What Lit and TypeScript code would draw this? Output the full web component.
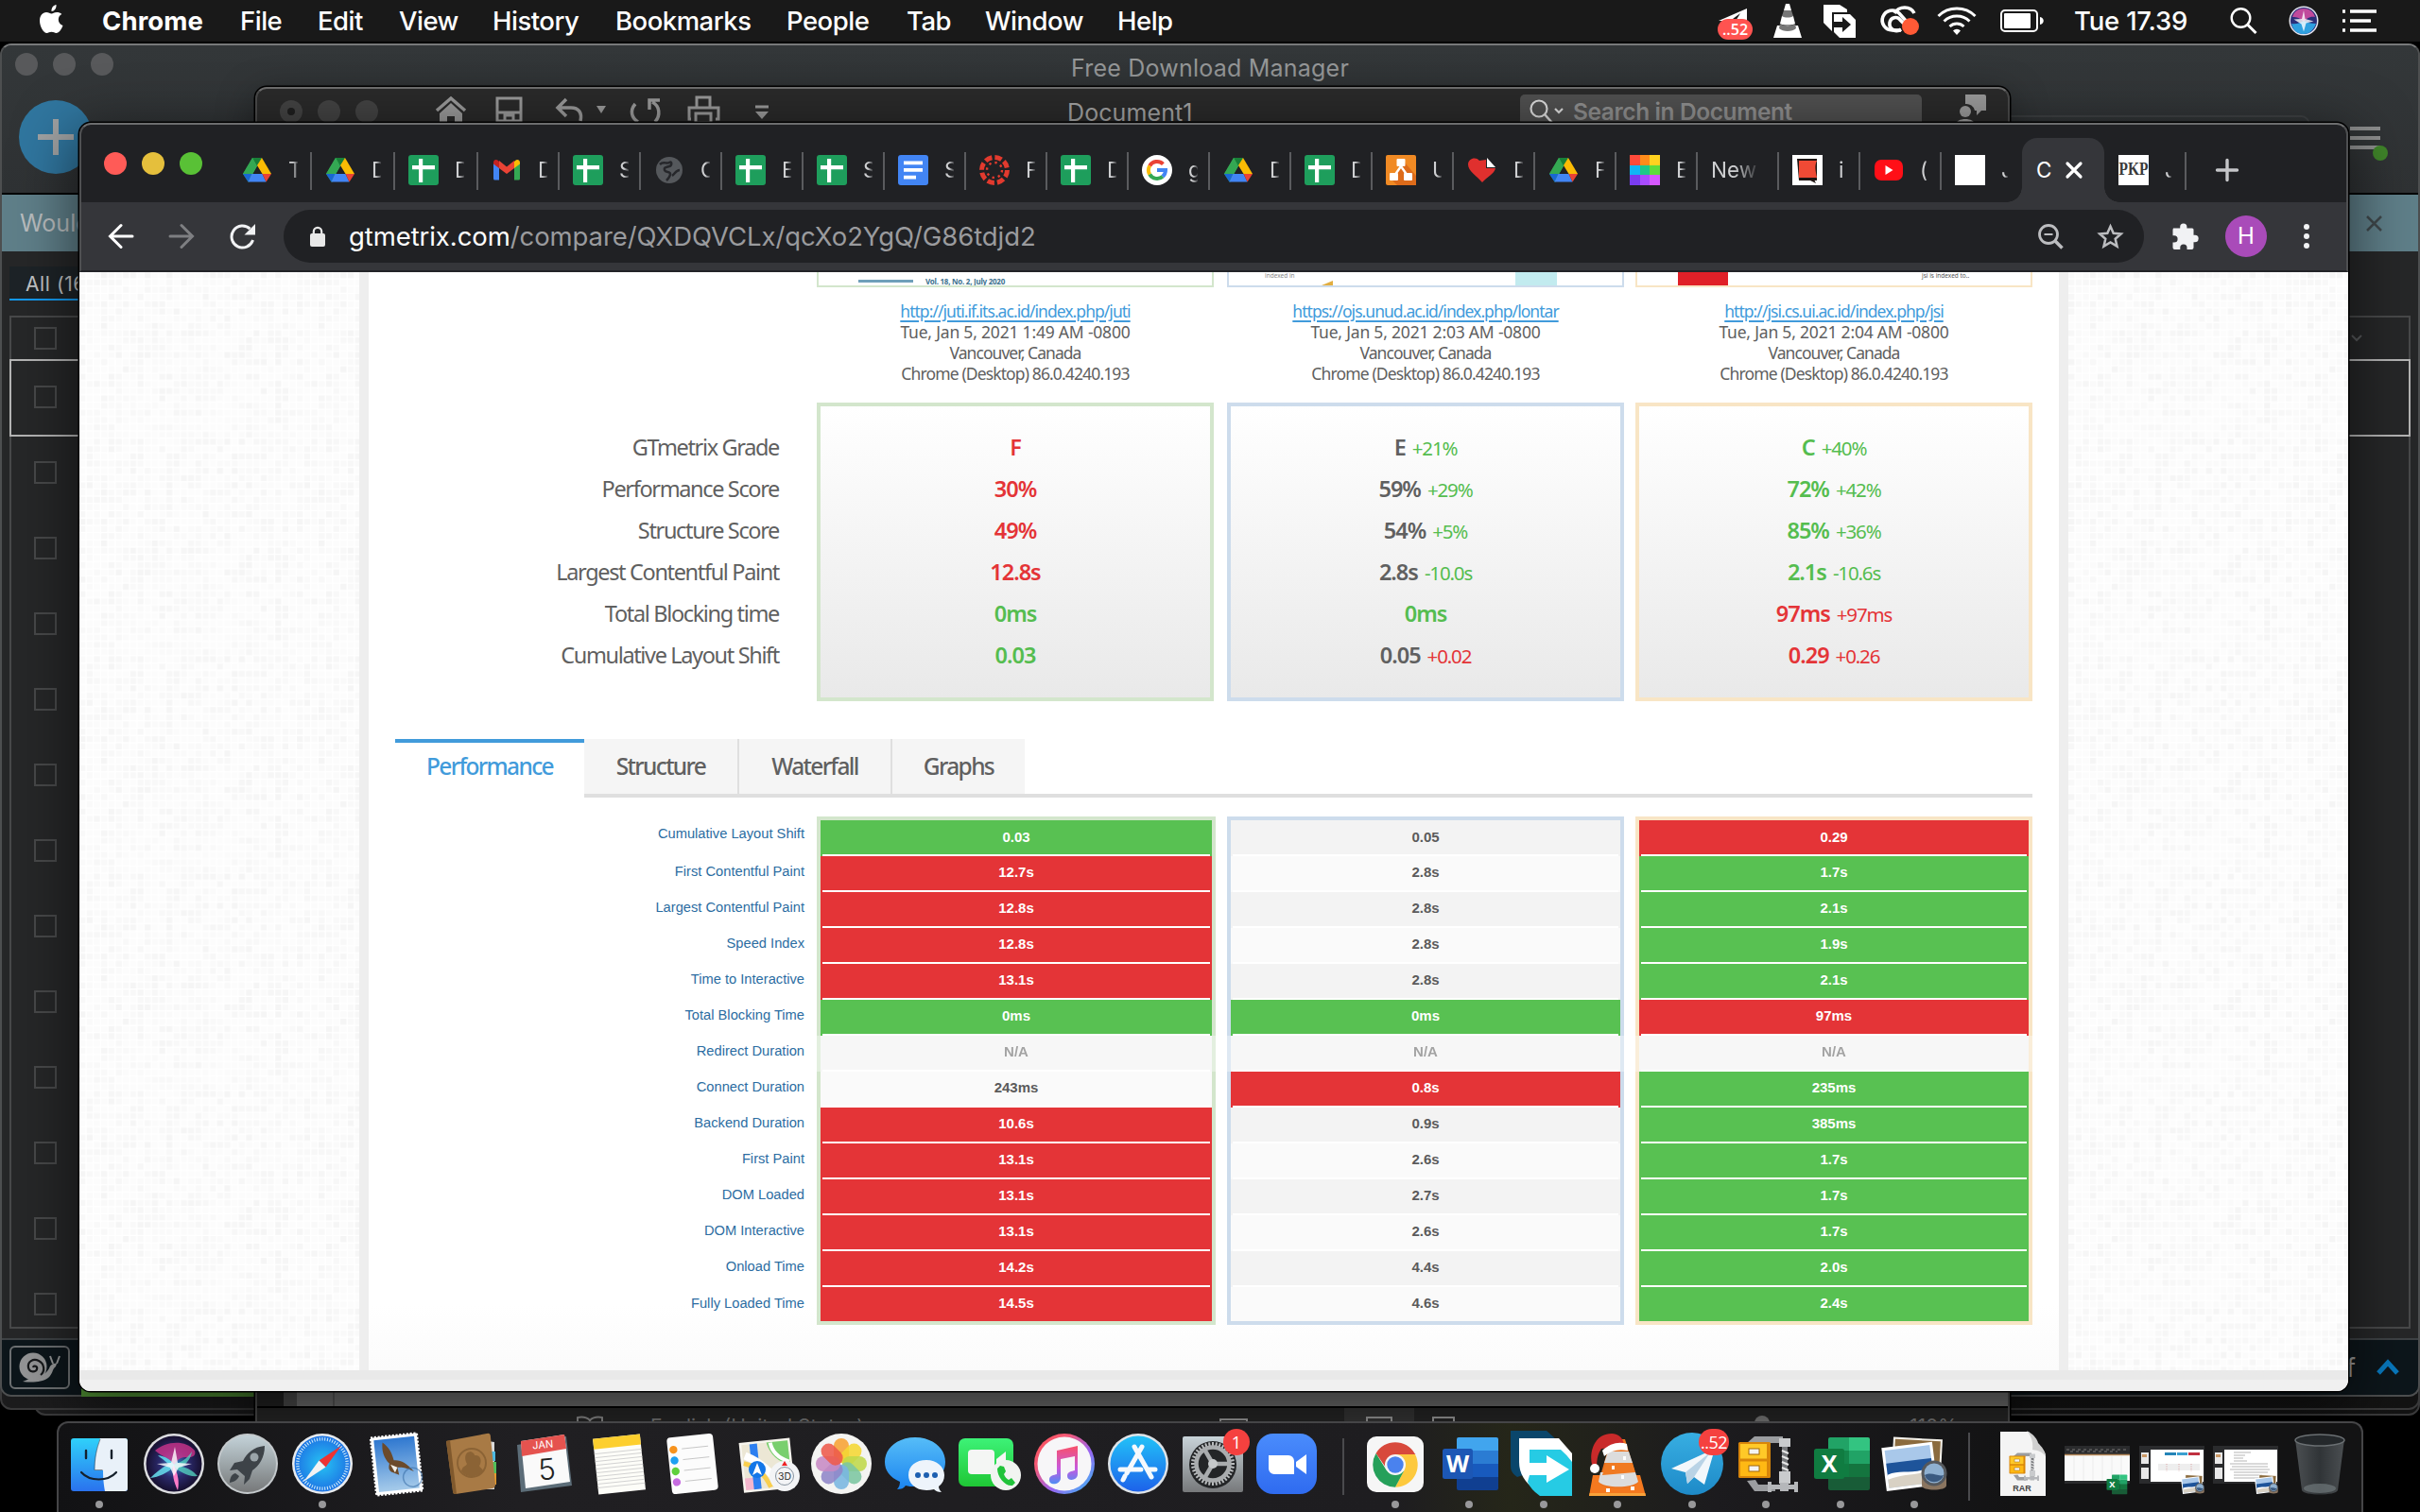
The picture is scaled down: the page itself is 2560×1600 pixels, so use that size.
import { LitElement, html, svg, css, nothing } from "lit";
import { customElement } from "lit/decorators.js";
import { classMap } from "lit/directives/class-map.js";

/* ---------- small favicons (32 x 32) ---------- */
const fav: Record<string, unknown> = {
  drive: html`<svg viewBox="0 0 32 32"><path d="M11 3h10L11 20H1z" fill="#34a853"/><path d="M11 3h10l-5 9z" fill="#188038"/><path d="M11 3l5 9-9 17L1 20z" fill="#34a853"/><path d="M21 3l10 17H21.5L16 11z" fill="#fbbc04"/><path d="M1 20h9.5l-4 8.500z" fill="#1967d2"/><path d="M10.500 20h11l4 8.500h-19z" fill="#4285f4"/><path d="M21.500 20H31l-5.500 8.500z" fill="#ea4335"/><path d="M16 12.500l4.500 7.500h-9z" fill="#202124"/></svg>`,
  sheet: html`<svg viewBox="0 0 32 32"><rect width="32" height="32" rx="3" fill="#1e9e5c"/><path d="M4 11h24v4.200H4zM11 4h4.200v25H11z" fill="#fff"/></svg>`,
  gmail: html`<svg viewBox="0 0 32 32"><path d="M2 8v17a1.500 1.500 0 0 0 1.500 1.500H8V13z" fill="#4285f4"/><path d="M30 8v17a1.500 1.500 0 0 1-1.500 1.500H24V13z" fill="#34a853"/><path d="M24 7v7l6-4.500V8c0-3-3-4-5-2z" fill="#fbbc04"/><path d="M8 6v8l8 6 8-6V6l-8 6.500z" fill="#ea4335"/><path d="M2 9.500 8 14V7L7 6C5 4 2 5 2 8z" fill="#c5221f"/></svg>`,
  globe: html`<svg viewBox="0 0 32 32"><circle cx="16" cy="16" r="14" fill="#55585c"/><path d="M6 10c4-4 7 0 10-2s3 3 0 4-6 1-5 4 6 1 6 4-2 5-4 7M19 22c3-2 4-6 8-6" stroke="#26272b" stroke-width="2.500" fill="none"/></svg>`,
  docs: html`<svg viewBox="0 0 32 32"><rect width="32" height="32" rx="3" fill="#4285f4"/><path d="M6 6.500h20v3.800H6zM6 14h20v3.800H6zM6 21.800h13v3.800H6z" fill="#fff"/></svg>`,
  canvas: html`<svg viewBox="0 0 32 32"><circle cx="16" cy="16" r="13.500" fill="none" stroke="#e23a2e" stroke-width="5" stroke-dasharray="7.500 3.100"/><circle cx="16" cy="16" r="8" fill="none" stroke="#e23a2e" stroke-width="2.400" stroke-dasharray="2.400 3.900"/></svg>`,
  google: html`<svg viewBox="0 0 32 32"><circle cx="16" cy="16" r="16" fill="#fff"/><g fill="none" stroke-width="4"><path d="M22.400 9.600A9 9 0 0 0 8.200 11.500" stroke="#ea4335"/><path d="M8.200 11.500a9 9 0 0 0 0 9" stroke="#fbbc04"/><path d="M8.200 20.500A9 9 0 0 0 22 22.700" stroke="#34a853"/><path d="M22 22.700a9 9 0 0 0 3-6.700h-9" stroke="#4285f4"/></g></svg>`,
  orange: html`<svg viewBox="0 0 32 32"><rect width="32" height="32" rx="2" fill="#f08a24"/><path d="M20 8l12 14v10H12L6 26z" fill="#dd6b1a"/><path d="M16 8v6M16 12l-7 10M16 12l7 10" stroke="#fff" stroke-width="2.400"/><rect x="11.500" y="4" width="9" height="8" rx="1" fill="#fff"/><rect x="4" y="19" width="9" height="8" rx="1" fill="#fff"/><rect x="19" y="19" width="9" height="8" rx="1" fill="#fff"/></svg>`,
  heart: html`<svg viewBox="0 0 32 32"><path d="M16 29C10 22 1 17 1 10c0-6 8-9 12-4l7-1v9h10c-1 6-9 9-14 15z" fill="#e0302e"/><path d="M21 3l9 10h-9z" fill="#fff"/></svg>`,
  grid: html`<svg viewBox="0 0 32 32"><path d="M0 0h11v11H0z" fill="#ff4a3a"/><path d="M11 0h10v11H11z" fill="#ff8c1a"/><path d="M21 0h11v11H21z" fill="#ffd21f"/><path d="M0 11h11v10H0z" fill="#10b5f5"/><path d="M11 11h10v10H11z" fill="#1dc98a"/><path d="M21 11h11v10H21z" fill="#5fdc3c"/><path d="M0 21h11v11H0z" fill="#7a3cf0"/><path d="M11 21h10v11H11z" fill="#a84cff"/><path d="M21 21h11v11H21z" fill="#d557ff"/></svg>`,
  book: html`<svg viewBox="0 0 32 32"><rect width="32" height="32" fill="#fff"/><path d="M5 4h21v23H7z" fill="#1f1412"/><path d="M7 6h19c-3 6-1 12 0 18H7z" fill="#f04a35"/><path d="M17 26h6l2 4z" fill="#1f1412"/></svg>`,
  youtube: html`<svg viewBox="0 0 32 32"><rect x="1" y="5" width="30" height="22" rx="7" fill="#ff0f17"/><path d="M12.500 11v10l8-5z" fill="#fff"/></svg>`,
  blank: html`<svg viewBox="0 0 32 32"><rect width="32" height="32" fill="#fff"/></svg>`,
  pkp: html`<svg viewBox="0 0 32 32"><rect width="32" height="32" fill="#fff"/><text x="16" y="21" text-anchor="middle" textLength="31" lengthAdjust="spacingAndGlyphs" font-family="Liberation Serif, serif" font-weight="700" font-size="19" fill="#3a3a3a">PKP</text></svg>`,
};

const tabs: { icon?: string; text: string; wide?: boolean; active?: boolean }[] = [
  { icon: "drive", text: "T", wide: true }, { icon: "drive", text: "D", wide: true }, { icon: "sheet", text: "D", wide: true },
  { icon: "gmail", text: "D" }, { icon: "sheet", text: "S" }, { icon: "globe", text: "C" }, { icon: "sheet", text: "E" },
  { icon: "sheet", text: "S" }, { icon: "docs", text: "S" }, { icon: "canvas", text: "F" }, { icon: "sheet", text: "D" },
  { icon: "google", text: "g" }, { icon: "drive", text: "D" }, { icon: "sheet", text: "D" }, { icon: "orange", text: "U" },
  { icon: "heart", text: "D" }, { icon: "drive", text: "F" }, { icon: "grid", text: "E" }, { text: "New" },
  { icon: "book", text: "i" }, { icon: "youtube", text: "(" }, { icon: "blank", text: "J" }, { text: "C", active: true },
  { icon: "pkp", text: "J" },
];

/* ---------- compare report data ---------- */
type Tone = "good" | "bad" | "plain" | "na";
type Score = [string, Tone, string?, Tone?];
const scoreLabels = ["GTmetrix Grade", "Performance Score", "Structure Score", "Largest Contentful Paint", "Total Blocking time", "Cumulative Layout Shift"];
const sites: { tint: string; url: string; time: string; scores: Score[] }[] = [
  { tint: "green", url: "http://juti.if.its.ac.id/index.php/juti", time: "Tue, Jan 5, 2021 1:49 AM -0800",
    scores: [["F", "bad"], ["30%", "bad"], ["49%", "bad"], ["12.8s", "bad"], ["0ms", "good"], ["0.03", "good"]] },
  { tint: "blue", url: "https://ojs.unud.ac.id/index.php/lontar", time: "Tue, Jan 5, 2021 2:03 AM -0800",
    scores: [["E", "plain", "+21%", "good"], ["59%", "plain", "+29%", "good"], ["54%", "plain", "+5%", "good"], ["2.8s", "plain", "-10.0s", "good"], ["0ms", "good"], ["0.05", "plain", "+0.02", "bad"]] },
  { tint: "amber", url: "http://jsi.cs.ui.ac.id/index.php/jsi", time: "Tue, Jan 5, 2021 2:04 AM -0800",
    scores: [["C", "good", "+40%", "good"], ["72%", "good", "+42%", "good"], ["85%", "good", "+36%", "good"], ["2.1s", "good", "-10.6s", "good"], ["97ms", "bad", "+97ms", "bad"], ["0.29", "bad", "+0.26", "bad"]] },
];
const metricLabels = ["Cumulative Layout Shift", "First Contentful Paint", "Largest Contentful Paint", "Speed Index", "Time to Interactive", "Total Blocking Time", "Redirect Duration", "Connect Duration", "Backend Duration", "First Paint", "DOM Loaded", "DOM Interactive", "Onload Time", "Fully Loaded Time"];
const g = (...v: string[]) => v.map((x) => [x, "good"] as [string, Tone]);
const b = (...v: string[]) => v.map((x) => [x, "bad"] as [string, Tone]);
const p = (...v: string[]) => v.map((x) => [x, "plain"] as [string, Tone]);
const na: [string, Tone] = ["N/A", "na"];
const metrics: [string, [string, Tone][]][] = [
  ["green", [...g("0.03"), ...b("12.7s", "12.8s", "12.8s", "13.1s"), ...g("0ms"), na, ...p("243ms"), ...b("10.6s", "13.1s", "13.1s", "13.1s", "14.2s", "14.5s")]],
  ["blue", [...p("0.05", "2.8s", "2.8s", "2.8s", "2.8s"), ...g("0ms"), na, ...b("0.8s"), ...p("0.9s", "2.6s", "2.7s", "2.6s", "4.4s", "4.6s")]],
  ["amber", [...b("0.29"), ...g("1.7s", "2.1s", "1.9s", "2.1s"), ...b("97ms"), na, ...g("235ms", "385ms", "1.7s", "1.7s", "1.7s", "2.0s", "2.4s")]],
];

/* paper-like checker texture beside the report */
const texture = (id: string) => {
  const n = 30, step = 7.67;
  let seed = 7;
  const cells = [];
  for (let y = 0; y < n; y++) for (let x = 0; x < n; x++) {
    seed = (seed * 1103515245 + 12345) % 2147483648;
    const r = seed / 2147483648;
    const c = 252 - Math.floor(r * r * 8);
    cells.push(svg`<rect x=${(x * step).toFixed(1)} y=${(y * step).toFixed(1)} width="6.400" height="6.400" fill="rgb(${c},${c},${c})"/>`);
  }
  return html`<svg class="texture"><defs><pattern id=${id} width=${n * step} height=${n * step} patternUnits="userSpaceOnUse">${cells}</pattern></defs><rect width="100%" height="100%" fill="url(#${id})"/></svg>`;
};

/* ---------- dock icons (64 x 64) ---------- */
const petals = ["#f7a233", "#f5d733", "#bfd84a", "#7cc6a0", "#79b6e0", "#8f86c8", "#c78ac4", "#ee5a4a"];
const ticks = (n: number, r1: number, r2: number, w: number, c: string) =>
  Array.from({ length: n }, (_, i) => svg`<line x1="32" y1=${32 - r1} x2="32" y2=${32 - r2} stroke=${c} stroke-width=${w} transform="rotate(${(i * 360) / n} 32 32)"/>`);
const officeTile = (letter: string, c: string[]) => svg`
  <path d="M19 6a2 2 0 0 1 2-2h20v14H19z" fill=${c[0]}/><path d="M41 4h20a2 2 0 0 1 2 2v12H41z" fill=${c[1]}/>
  <path d="M19 18h22v14H19z" fill=${c[2]}/><path d="M41 18h22v14H41z" fill=${c[3]}/>
  <path d="M19 32h22v14H19z" fill=${c[4]}/><path d="M41 32h22v14H41z" fill=${c[5]}/>
  <path d="M19 46h44v12a2 2 0 0 1-2 2H21a2 2 0 0 1-2-2z" fill=${c[6]}/>
  <rect x="4" y="16" width="32" height="32" rx="2.500" fill=${c[7]}/>
  <text x="20" y="41" text-anchor="middle" font-family="Open Sans, Liberation Sans, sans-serif" font-weight="700" font-size="25" fill="#fff">${letter}</text>`;
const excelC = ["#21a366", "#33c481", "#14854a", "#21a366", "#107c41", "#14753f", "#185c37", "#107c41"];
const wordC = ["#41a5ee", "#41a5ee", "#2b7cd3", "#2b7cd3", "#185abd", "#185abd", "#103f91", "#1c57b5"];
const photo = svg`
  <g transform="rotate(3 36 24)"><rect x="9" y="5" width="52" height="40" fill="#f4f1ea"/><rect x="11" y="7" width="48" height="36" fill="#8b6b3e"/></g>
  <g transform="rotate(-7 26 36)"><rect x="0" y="12" width="54" height="46" fill="#fff"/><rect x="3" y="15" width="48" height="40" fill="#a9c8ea"/><path d="M3 29h48v15H3z" fill="#1e549a"/><path d="M3 42c12-5 25 4 48-2v15H3z" fill="#d8d1c4"/><path d="M3 41c15-5 25 4 48-3v3c-20 5-30 0-48 5z" fill="#fff"/></g>
  <path d="M40 42h26v13c0 6-26 6-26 0z" fill="#8a7560"/><circle cx="53" cy="42" r="13.500" fill="#55585c"/><circle cx="53" cy="42" r="10.500" fill="#8fb0d0"/><path d="M43 44a10.500 10.500 0 0 0 20 0c-6 2-12-4-20 0z" fill="#3b5a80"/>`;
const cabinet = svg`
  <path d="M12 10 20 3h30v7H24l-4 6zM12 50l8 11h22v-7H24l-3-5z" fill="#9b9da0"/>
  <path d="M46 5h12v9H46zM46 40h12v13H46z" fill="#c9cbcd"/><path d="M49 14h6v26h-6z" fill="#77797c"/><path d="M49 18l7 3M49 24l7 3M49 30l7 3M49 36l7 3" stroke="#e6e6e6" stroke-width="2.200"/>
  <path d="M34 54h32v5H34zM34 51h4v11h-4zM62 51h4v11h-4zM47 52h9v9h-9z" fill="#b5b7ba"/>
  <rect x="3" y="9" width="34" height="38" rx="1.500" fill="#d8860a"/><rect x="5" y="11" width="28" height="15.500" fill="#ffc928"/><rect x="5" y="29.500" width="28" height="15.500" fill="#ffb914"/>
  <rect x="14" y="16" width="11" height="6" fill="#f4f4f4" stroke="#a0690a"/><rect x="14" y="34" width="11" height="6" fill="#f4f4f4" stroke="#a0690a"/>`;
const miniWindow = (kind: string) => svg`
  <rect x="-2" y="13" width="69" height="40" fill="#2a2b2d"/>
  ${kind === "sheet" ? svg`<rect x="-2" y="23" width="69" height="27" fill="#fafafa"/><path d="M-2 22.500h69" stroke="#b98a5a" stroke-width="1.500"/><path d="M0 17h64M4 19h50" stroke="#777" stroke-width="1" stroke-dasharray="3 3"/><path d="M8 24v26M18 24v26M28 24v26M38 24v26M48 24v26M58 24v26" stroke="#ececec"/>`
    : svg`<rect x="10" y="17" width="56" height="34" fill="#fff"/><rect x="0" y="20" width="8" height="12" fill="#e8e8e8"/><rect x="0" y="36" width="8" height="12" fill="#e8e8e8"/><rect x="1" y="22" width="5" height="3" fill="#c96"/>`}
  ${kind === "compare" ? svg`<path d="M25 20h12v3H25z" fill="#2484b8"/><path d="M38 20h11v3H38z" fill="#3aa0d0"/><path d="M50 20h12v3H50z" fill="#c03040"/><path d="M18 32h44v7H18z" fill="#eee"/><path d="M27 32v8M40 32v8M53 32v8" stroke="#d9a0a0" stroke-dasharray="1 1.500"/>` : nothing}
  ${kind === "text" ? svg`<path d="M20 20h18M20 23h12M20 26h10M20 29h14M16 32h40M18 35h38M16 38h42M20 41h36M20 44h30M20 47h38" stroke="#b5b5b5" stroke-width="1"/>` : nothing}
  ${kind === "sheet" ? svg`<g transform="translate(41 42) scale(.37)">${officeTile("X", excelC)}</g>` : svg`<g transform="translate(43 42) scale(.36)">${photo}</g>`}`;

const apps: Record<string, unknown> = {
  finder: svg`<rect x="2" y="5" width="60" height="56" rx="3" fill="url(#fdL)"/><path d="M33 5h26a3 3 0 0 1 3 3v50a3 3 0 0 1-3 3H38c-1-6-2-12-2-22h-9c0-12 2-24 6-34z" fill="#e9f1f9"/><path d="M18 18v8M45 18v8" stroke="#15202b" stroke-width="2.400" stroke-linecap="round"/><path d="M13 41c9 10 28 10 37 0" stroke="#15202b" stroke-width="2.200" fill="none" stroke-linecap="round"/><path d="M33 6c-4 10-6 21-6 32.500h8.500" stroke="#15202b" stroke-width="1" fill="none" opacity=".5"/>`,
  siri: svg`<circle cx="32" cy="32" r="32" fill="#dcdde0"/><circle cx="32" cy="32" r="29.500" fill="url(#siri)"/><path d="M12 18c10-9 31-13 42 0 2 6-4 8-10 7-6 0-9 4-12 8-5-8-12-8-20-15z" fill="#d8348e" opacity=".75"/><path d="M32 33c-4-6-9-9-17-10 4 4 9 6 11 10-7 3-13 8-19 14 9-1 18-5 25-12z" fill="#67e0f0" opacity=".85"/><path d="M32 33c6-2 14-6 19-14-1 6-4 12-11 16 6 1 12 4 17 10-10 1-18-4-25-10z" fill="#55d9c4" opacity=".75"/><path d="M31 34c-1 9 1 18 5 26 2-9 0-18-4-26z" fill="#ff7cc8"/><path d="M14 32l15-1 4-17 3 17 15 1-14 4-5 9-4-9z" fill="#fff" opacity=".8"/>`,
  launchpad: svg`<circle cx="32" cy="32" r="32" fill="#c4c9cc"/><circle cx="32" cy="32" r="30" fill="url(#lp)"/><path d="M50 13c-12 1-19 8-23 16l-9 2-5 8 8-1 8 7-1 9 6-6 3-9c7-5 13-13 13-26z" fill="#3d4348"/><circle cx="39" cy="25" r="4.500" fill="#9aa4a9"/><path d="M19 42c-4 1-6 5-6 10 5-1 8-3 10-7z" fill="#3d4348"/>`,
  safari: svg`<circle cx="32" cy="32" r="32" fill="#e8ebee"/><circle cx="32" cy="32" r="29.500" fill="url(#saf)"/>${ticks(60, 28, 24.500, 1, "#d9f0fb")}<path d="M52 13 28.500 28.500l7 7z" fill="#ee3333"/><path d="M12 51 28.500 28.500l7 7z" fill="#f3f3f3"/>`,
  mail: svg`<g transform="rotate(-6 32 32)"><rect x="8" y="2" width="49" height="61" fill="#fff" stroke="#fff" stroke-width="2.500" stroke-dasharray="2.200 1.600"/><rect x="11" y="5" width="43" height="55" fill="url(#sky)"/><path d="M20 8c6 5 9 12 10 20 7 0 13 4 20 14-8-5-12-6-17-6l1 8-8-4c-3-3-2-6-1-9-5-6-7-14-5-23z" fill="#6b4a2b"/><path d="M26 32l7 4-3 5z" fill="#f2efe9"/><circle cx="48" cy="48" r="10" fill="none" stroke="#3a6fa8" stroke-width="1.500" opacity=".6"/></g>`,
  contacts: svg`<path d="M50 8l7 1v50H44z" fill="#d9d9d9"/><path d="M52 19h6v10h-6z" fill="#4db8e0"/><path d="M53 30h6v12h-6z" fill="#52c05a"/><path d="M53 42h6v12h-6z" fill="#e59a2d"/><path d="M6 8 49 0q4-1 4 4l5 50q0 3-3 4L16 64q-3 0-3-3z" fill="#a87a45"/><path d="M6 8l4-1 7 57h-2q-2 0-2-3z" fill="#80592d"/><circle cx="33" cy="31" r="15" fill="none" stroke="#8b6335" stroke-width="2"/><path d="M22 40c1-6 5-5 6-8-4-7-1-13 4-13 3 1 4 3 4 4 7-1 8 7 5 11 1 3 4 3 4 6-7 7-17 7-23 0z" fill="#8b6335"/>`,
  calendar: svg`<path d="M3 12l52-9 6 52-54 7z" fill="#5c6d78"/><path d="M7 8l46-7 6 50-47 7z" fill="#fafafa"/><path d="M7 8l46-7 2 15-47 8z" fill="#e5534f"/><g transform="rotate(-5 32 32)" text-anchor="middle"><text x="32" y="15.500" font-family="Inter, sans-serif" font-size="11" fill="#fff">JAN</text><text x="34" y="49" font-family="Inter, sans-serif" font-weight="300" font-size="31" fill="#222">5</text></g>`,
  notes: svg`<g transform="rotate(-6 32 32)"><rect x="7" y="3" width="50" height="59" fill="#fdfdf8"/><rect x="7" y="3" width="50" height="11" fill="#fdcf2e"/>${[19, 23, 27, 31, 35, 39, 43, 47, 51, 55].map((y) => svg`<path d="M7 ${y}h50" stroke="#cfcfcf" stroke-width=".9"/>`)}</g>`,
  reminders: svg`<g transform="rotate(-6 32 32)"><rect x="7" y="2" width="49" height="60" rx="4" fill="#fcfcfc"/>${["#f7931e", "#1ea0f2", "#5fd03c", "#c66be0"].map((c, i) => svg`<circle cx="13" cy=${15 + i * 11.500} r="4.200" fill=${c}/><path d="M22 ${15 + i * 11.500}h28" stroke="#c4c4c4" stroke-width=".9"/>`)}</g>`,
  maps: svg`<g transform="rotate(-6 32 32)"><rect x="4" y="7" width="54" height="53" fill="#f7f5ee"/><rect x="6.500" y="9.500" width="49" height="48" fill="#ece7d5"/><path d="M33 9.500h22.500v26C44 32 35 22 33 9.500z" fill="#79cf6e"/><path d="M6.500 45h14v12.500h-14z" fill="#f4b6cd"/><path d="M15 9.500h8v48h-8z" fill="#2d7ff0"/><path d="M9 21c15 8 26 19 32 34" stroke="#fff" stroke-width="8" fill="none"/><path d="M7 29c14 5 21 14 26 28" stroke="#f9cf4e" stroke-width="5" fill="none"/><path d="M37 10c1 12 9 18 18 22" stroke="#fff" stroke-width="4" fill="none"/></g><circle cx="21" cy="38" r="9" fill="#1477e8"/><path d="M21 31l5 13-5-3-5 3z" fill="#fff"/><circle cx="50" cy="45" r="16" fill="#f3f4f6"/><circle cx="50" cy="45" r="9.500" fill="none" stroke="#8894a0"/><path d="M50 29l3 5h-6z" fill="#e22"/><text x="50" y="49" text-anchor="middle" font-family="Inter, sans-serif" font-size="10.500" fill="#333">3D</text>`,
  photos: svg`<circle cx="32" cy="32" r="32" fill="#f4f4f2"/>${petals.map((c, i) => svg`<rect x="24" y="5" width="16" height="26" rx="8" fill=${c} opacity=".88" transform="rotate(${i * 45} 32 32)"/>`)}`,
  messages: svg`<path d="M31 4c18 0 32 11 32 26S49 56 31 56c-4 0-7 0-10-1-2 3-5 4-9 4 2-2 3-5 3-8C4 46-1 39-1 30 -1 15 13 4 31 4z" fill="url(#msg)"/><path d="M43 28c11 0 19 7 19 16 0 5-2 9-6 12 0 2 1 4 3 6-4 0-6-1-8-3-17 4-27-5-27-15s8-16 19-16z" fill="#eef4fb"/><circle cx="34" cy="44" r="3" fill="#1d5fb0"/><circle cx="43" cy="44" r="3" fill="#1d5fb0"/><circle cx="52" cy="44" r="3" fill="#1d5fb0"/>`,
  facetime: svg`<rect x="-1" y="5" width="58" height="51" rx="7" fill="url(#ft)"/><rect x="9" y="17" width="28" height="26" rx="4" fill="#f4f6f4"/><path d="M39 27l10-8v22l-10-7z" fill="#f4f6f4"/><circle cx="49" cy="44" r="16" fill="#f1f4f1"/><path d="M43 34l4 1 2 5-2 3c1 3 3 5 5 6l3-2 4 5-3 3c-8 1-16-9-16-18z" fill="#20c33a"/>`,
  itunes: svg`<circle cx="32" cy="32" r="32" fill="url(#it)"/><circle cx="32" cy="32" r="28.500" fill="#f7f6f8"/><path d="M24 18l22-5v30c0 7-11 8-11 2 0-5 5-5 8-6V24l-15 3v20c0 7-12 9-12 2 0-5 5-5 8-6z" fill="url(#note)"/>`,
  appstore: svg`<circle cx="32" cy="32" r="32" fill="#dfe4e8"/><circle cx="32" cy="32" r="29.500" fill="url(#as)"/><g stroke="#f5f9fd" stroke-width="5" stroke-linecap="round"><path d="M36 14 20 42M28 14l18 32M13 38h22M42 38h8M18 45l-2 4"/></g>`,
  settings: svg`<rect y="3" width="64" height="59" rx="2" fill="url(#set)"/><circle cx="32" cy="33" r="25" fill="#232527"/>${ticks(36, 23, 19, 2, "#b9bcbe")}<circle cx="32" cy="32" r="17.500" fill="none" stroke="#a9acae" stroke-width="4.500"/><g stroke="#a9acae" stroke-width="4.500"><path d="M32 32H49M32 32 23.500 17.300M32 32 23.500 46.700"/></g><circle cx="32" cy="32" r="5" fill="#c5c8ca"/>`,
  zoom: svg`<rect width="64" height="64" rx="18" fill="url(#zm)"/><path d="M13 23h21a6 6 0 0 1 6 6v14H19a6 6 0 0 1-6-6zM42 30l11-8v21l-11-8z" fill="#fff"/>`,
  chrome: svg`<rect x="2" y="3" width="60" height="59" rx="10" fill="#f6f6f6"/><path d="M32 22h21.500l-1-1A23.700 23.700 0 0 0 11.500 21l12 17z" fill="#d8493c"/><path d="M41.500 38.500 32 56.700A23.700 23.700 0 0 0 53 22H32z" fill="#fdc93e"/><path d="M22.500 38.500 11.500 21A23.700 23.700 0 0 0 32 56.700l9-17z" fill="#25a05a"/><circle cx="32" cy="33" r="11" fill="#f6f6f6"/><circle cx="32" cy="33" r="8.700" fill="#4a82ee"/>`,
  word: officeTile("W", wordC),
  share: svg`<path d="M-3-3h38l10 9L22 40 4 46C-2 42-3 38-3 34z" fill="#0a466b"/><path d="M6 5h42l14 16v30L24 60C12 52 6 42 6 30z" fill="#fff"/><path d="M17 17h33q7 6 12 13v36H28q-10-7-13-15l2-7h18V31H17z" fill="#26cbe4"/><path d="M17 31h18v-8l24 15-24 14v-9H17z" fill="#fff"/>`,
  vlc: svg`<path d="M6 44h50l6 22H2z" fill="#f5791f"/><path d="M2 66h60l-.6-3H2.600z" fill="#f9a23a"/><path d="M25 6h15l14 46c-6 8-36 8-42 0z" fill="#ec7420"/><path d="M22 19h22l4 12H18zM14 41h37l3 10c-6 7-36 7-42 0z" fill="#dcdcdc"/><path d="M16 44l4-13h28l3 10z" fill="#f07a22"/><path d="M15 16C8 26 12 34 8 40 0 28 4 0 26 0c8 0 13 6 13 14z" fill="#c92a2a"/><path d="M16 18c8-8 18-10 26-7l1 7c-10-2-18 0-25 6z" fill="#fff"/><circle cx="8" cy="37" r="5" fill="#fff"/><path d="M26 36h3M38 26h3M46 58h4M20 60h4M36 46h3" stroke="#fff" stroke-width="4"/>`,
  telegram: svg`<circle cx="32" cy="32" r="33" fill="url(#tg)"/><path d="M10 37 56 16 45 54 34 46l-7 7-2-12z" fill="#f2f7fb"/><path d="M25 41l26-21-17 26-7 7z" fill="#b9d3e6"/>`,
  zip: cabinet,
  excel: officeTile("X", excelC),
  preview: photo,
  rar: svg`<path d="M8-2h30c4 4 8 8 9 12 3 5 9 8 9 14v42H8z" fill="#f4f4f4"/><path d="M36-3c6 3 11 8 12 13 4 4 8 9 8 14-4-5-8-6-14-7 1-8-1-14-6-20z" fill="#cfcfcf"/><g transform="translate(16 19) scale(.5)">${cabinet}</g><text x="31" y="61" text-anchor="middle" font-family="Liberation Sans, sans-serif" font-weight="700" font-size="9" fill="#444">RAR</text>`,
  winsheet: miniWindow("sheet"),
  wincompare: miniWindow("compare"),
  wintext: miniWindow("text"),
  trash: svg`<path d="M6 6l7 54c2 6 36 6 38 0l7-54z" fill="url(#tr)"/><ellipse cx="32" cy="7" rx="26" ry="6" fill="#24282b" stroke="#6a6f72" stroke-width="1.500"/><ellipse cx="32" cy="58" rx="17" ry="5" fill="#6f777b" opacity=".7"/>`,
};
const defs = html`<svg class="defs"><defs>
  <linearGradient id="fdL" x2="0" y2="1"><stop stop-color="#2fd1fa"/><stop offset="1" stop-color="#2a72ee"/></linearGradient>
  <linearGradient id="lp" x2="0" y2="1"><stop stop-color="#c3d2d8"/><stop offset="1" stop-color="#77797a"/></linearGradient>
  <radialGradient id="siri"><stop stop-color="#3a8fd0"/><stop offset=".5" stop-color="#2b2a6e"/><stop offset="1" stop-color="#17102f"/></radialGradient>
  <radialGradient id="saf"><stop stop-color="#27c3f3"/><stop offset="1" stop-color="#1d74e4"/></radialGradient>
  <linearGradient id="sky" x2="0" y2="1"><stop stop-color="#2f78d0"/><stop offset="1" stop-color="#a6cbea"/></linearGradient>
  <linearGradient id="msg" x2="0" y2="1"><stop stop-color="#56bdf8"/><stop offset="1" stop-color="#1b84f0"/></linearGradient>
  <linearGradient id="ft" x2="0" y2="1"><stop stop-color="#3df277"/><stop offset="1" stop-color="#1fc735"/></linearGradient>
  <linearGradient id="it" x2="1" y2="1"><stop stop-color="#fb4f52"/><stop offset=".3" stop-color="#f45a78"/><stop offset=".6" stop-color="#9a63f0"/><stop offset="1" stop-color="#2fc4f6"/></linearGradient>
  <linearGradient id="note" x2="0" y2="1"><stop stop-color="#f95068"/><stop offset=".6" stop-color="#c65ae0"/><stop offset="1" stop-color="#4d8df5"/></linearGradient>
  <linearGradient id="as" x2="0" y2="1"><stop stop-color="#22c2f8"/><stop offset="1" stop-color="#1d62ea"/></linearGradient>
  <linearGradient id="set" x2="0" y2="1"><stop stop-color="#c8d3d9"/><stop offset="1" stop-color="#77797b"/></linearGradient>
  <linearGradient id="zm" x2="0" y2="1"><stop stop-color="#4a8cfc"/><stop offset="1" stop-color="#2f6bf0"/></linearGradient>
  <linearGradient id="tg" x2="0" y2="1"><stop stop-color="#37aee2"/><stop offset="1" stop-color="#1e8ac8"/></linearGradient>
  <linearGradient id="tr" x2="1"><stop stop-color="#4b4f52"/><stop offset=".5" stop-color="#303437"/><stop offset="1" stop-color="#4b4f52"/></linearGradient>
</defs></svg>`;

const dockGroups: { name: string; dot?: boolean; badge?: string }[][] = [
  [{ name: "finder", dot: true }, { name: "siri" }, { name: "launchpad" }, { name: "safari", dot: true }, { name: "mail" }, { name: "contacts" }, { name: "calendar" }, { name: "notes" }, { name: "reminders" }, { name: "maps" }, { name: "photos" }, { name: "messages" }, { name: "facetime" }, { name: "itunes" }, { name: "appstore" }, { name: "settings", badge: "1" }, { name: "zoom" }],
  [{ name: "chrome", dot: true }, { name: "word", dot: true }, { name: "share", dot: true }, { name: "vlc", dot: true }, { name: "telegram", dot: true, badge: "..52" }, { name: "zip", dot: true }, { name: "excel", dot: true }, { name: "preview", dot: true }],
  [{ name: "rar" }, { name: "winsheet" }, { name: "wincompare" }, { name: "wintext" }, { name: "trash" }],
];

/* ---------- menu bar ---------- */
@customElement("mac-menubar")
export class MacMenubar extends LitElement {
  static styles = css`
    :host { display: flex; justify-content: space-between; height: 44px; background: #191919; color: #fff; font: 500 27.500px/44px Inter, "Liberation Sans", sans-serif; }
    svg { display: block; overflow: visible; }
    .left { display: grid; grid-template-columns: 108px 146px 82px 86px 99px 130px 181px 127px 83px 140px 90px; white-space: nowrap; letter-spacing: -0.500px; }
    .apple { padding: 5px 0 0 41px; }
    .app { font-weight: 700; letter-spacing: 0.100px; }
    .right { display: flex; align-items: center; padding-right: 46px; }
    .tg { width: 58px; } .vlc { width: 54px; } .sh { width: 60px; } .cc { width: 60px; } .wf { width: 67px; } .bt { width: 78px; }
    .clock { width: 165px; white-space: nowrap; letter-spacing: -0.200px; } .find { width: 62px; } .sr { width: 57px; }
  `;
  render() {
    return html`
      <div class="left">
        <span class="apple"><svg width="27" height="32" viewBox="0 0 27 32"><path d="M19 8c-3 0-4 1.500-5.500 1.500S10.500 8 8 8C4 8 1 11.500 1 17c0 6 4 13 7.500 13 2 0 2.500-1.200 5-1.200s3 1.200 5 1.200c3 0 5.500-4 7-8-3-1.200-4.700-3.500-4.700-6.300 0-2.500 1.300-4.500 3.500-5.700C23 8.600 21 8 19 8zM18.500 0C16 .3 13.200 3 13.500 7c2.800 0 5.400-3 5-7z" fill="#fff"/></svg></span>
        <span class="app">Chrome</span><span>File</span><span>Edit</span><span>View</span><span>History</span><span>Bookmarks</span><span>People</span><span>Tab</span><span>Window</span><span>Help</span>
      </div>
      <div class="right">
        <div class="tg"><svg width="38" height="38" viewBox="0 0 38 38"><path d="M1 19 31 6v14z" fill="#fff"/><path d="M12 20l12-9-6 10z" fill="#191919"/><rect y="17" width="37" height="22" rx="11" fill="#ff5350"/><text x="18.500" y="34" text-anchor="middle" font-size="16" font-family="Open Sans, sans-serif" font-weight="600" fill="#fff">..52</text></svg></div>
        <div class="vlc"><svg width="32" height="40" viewBox="0 0 32 40"><path d="M14 2h4l2 7h-8zM10 15h12l2 8c-3 2-13 2-16 0zM5 25h22l4 13H1z" fill="#fff"/><path d="M12 9h8l2 6c-3 2-9 2-12 0zM8 23c4 3 12 3 16 0l1 5c-4 4-14 4-18 0z" fill="#777"/></svg></div>
        <div class="sh"><svg width="34" height="36" viewBox="0 0 34 36"><path d="M0 1h17l8 5v3H9v20L0 20z" fill="#fff"/><path d="M11 11h17l6 6v19H17l-6-6z" fill="#fff"/><path d="M11 19h9v-5l9 8-9 8v-5h-9z" fill="#191919"/></svg></div>
        <div class="cc"><svg width="41" height="32" viewBox="0 0 41 32"><g fill="none" stroke="#fff" stroke-width="3.600"><path d="M22 26h-9a10.500 10.500 0 1 1 7-18l8 9"/><path d="M15 8C20 0 32 0 36 8M22 25c-5 4-13 0-12-7 1-6 8-7 11-3l6 6"/></g><circle cx="32" cy="22" r="9" fill="#ff5a36"/></svg></div>
        <div class="wf"><svg width="42" height="30" viewBox="0 0 42 30"><g fill="none" stroke="#fff" stroke-width="3"><path d="M1.500 10a28 28 0 0 1 39 0M7.500 15.500a19.500 19.500 0 0 1 27 0M13.500 21a11 11 0 0 1 15 0"/></g><path d="M17 25.500a5.500 5.500 0 0 1 8 0l-4 4.500z" fill="#fff"/></svg></div>
        <div class="bt"><svg width="46" height="24" viewBox="0 0 46 24"><rect x="1" y="1" width="38" height="22" rx="4" fill="none" stroke="#fff" stroke-width="2"/><rect x="4" y="4" width="28" height="16" rx="1" fill="#fff"/><path d="M42 8c5 1 5 7 0 8z" fill="#fff"/></svg></div>
        <div class="clock">Tue 17.39</div>
        <div class="find"><svg width="30" height="30" viewBox="0 0 30 30"><circle cx="11.500" cy="12" r="9.800" fill="none" stroke="#fff" stroke-width="2.400"/><path d="M18.500 19l9 9" stroke="#fff" stroke-width="3"/></svg></div>
        <div class="sr"><svg width="32" height="32" viewBox="0 0 32 32"><circle cx="16" cy="16" r="15.500" fill="#e4e4ee"/><circle cx="16" cy="16" r="14" fill="#2a2f7a"/><path d="M4 12C7 0 25 0 28 12c-6-1-9 2-12 5-4-4-7-5-12-5z" fill="#c04a9c"/><path d="M3 19c2 9 8 11 13 11s10-3 13-11c-5 0-9-1-13-3-3 2-8 4-13 3z" fill="#2fa0e0"/><path d="M16 5l1.500 9 9 2.500-8 2-2.500 9-2.500-8-8-5 8.500-.5z" fill="#fff" opacity=".8"/></svg></div>
        <svg width="36" height="24" viewBox="0 0 36 24"><path d="M0 2h3M0 12h3M0 22h3" stroke="#fff" stroke-width="3.500"/><path d="M8 2h28M8 12h22M8 22h28" stroke="#fff" stroke-width="3.500"/></svg>
      </div>`;
  }
}

/* ---------- Free Download Manager window ---------- */
@customElement("fdm-window")
export class FdmWindow extends LitElement {
  static styles = css`
    :host { display: flex; flex-direction: column; box-sizing: border-box; width: 2560px; height: 1432px; border-radius: 12px; overflow: hidden; background: #262728; border: 2px solid #4d4f50; border-top-color: #77797a; font-family: Inter, "Liberation Sans", sans-serif; }
    svg { display: block; overflow: visible; }
    .head { flex: none; height: 156px; background: linear-gradient(#333739, #2f3234); border-bottom: 2px solid #000; display: flex; flex-direction: column; }
    .title { display: grid; grid-template-columns: 1fr auto 1fr; align-items: center; height: 44px; color: #97999a; font-size: 25px; letter-spacing: 0.220px; padding-top: 2px; }
    .lights { display: flex; gap: 16px; padding-left: 14px; margin-top: -8px; }
    .lights i { width: 24px; height: 24px; border-radius: 50%; background: #58595b; }
    .tools { display: flex; justify-content: space-between; padding: 12px 32px 0 18px; }
    .plus { width: 78px; height: 78px; }
    .menu { margin-top: 28px; }
    .band { flex: none; height: 60px; background: #5f7f89; display: flex; align-items: center; justify-content: space-between; padding: 0 38px 0 19px; color: #b9bdbf; font-size: 25px; }
    .filter { flex: none; margin: 16px 0 0 8px; width: 150px; height: 34px; line-height: 37px; padding-left: 17px; background: #1d2327; border-bottom: 2px solid #149af0; color: #c3c5c6; font-size: 21px; letter-spacing: .6px; }
    .list { flex: none; margin: 16px 8px 0; height: 1072px; border: 2px solid #48494a; box-sizing: border-box; display: flex; flex-direction: column; }
    .row { flex: none; height: 80px; display: flex; align-items: center; justify-content: space-between; padding-left: 24px; }
    .row i { width: 20px; height: 20px; border: 2px solid #48494a; }
    .row.header { height: 44px; padding-right: 49px; }
    .row.on { margin: 0 -2px -2px; padding: 0 0 2px 24px; border: 2px solid #b4b4b4; height: 76px; }
    .foot { margin-top: 10px; flex: 1; border-top: 2px solid #3e4245; background: #0d161b; display: flex; justify-content: space-between; align-items: center; padding: 0 20px 0 8px; }
    .snail { width: 60px; height: 42px; border: 2px solid #6d7072; border-radius: 6px; display: grid; place-items: center; }
    .tail { display: flex; align-items: center; gap: 22px; color: #999; font-size: 27px; }
  `;
  render() {
    return html`
      <div class="head">
        <div class="title"><div class="lights"><i></i><i></i><i></i></div><span>Free Download Manager</span><span></span></div>
        <div class="tools">
          <svg class="plus" viewBox="0 0 78 78"><circle cx="39" cy="39" r="39" fill="#30769f"/><path d="M20 39h38M39 20v38" stroke="#a0a2a3" stroke-width="6"/></svg>
          <svg class="menu" width="40" height="40" viewBox="0 0 40 40"><path d="M0 2h32M0 12h32M0 22h32" stroke="#8e8f8f" stroke-width="4"/><circle cx="32" cy="28" r="8" fill="#40862a"/></svg>
        </div>
      </div>
      <div class="band"><span>Would</span><svg width="17" height="17" viewBox="0 0 17 17"><path d="M1 1l15 15M16 1 1 16" stroke="#3f484b" stroke-width="2.500"/></svg></div>
      <div class="filter">All (16)</div>
      <div class="list">
        <div class="row header"><i></i><svg width="12" height="8" viewBox="0 0 12 8"><path d="M1 1l5 5 5-5" stroke="#56585a" stroke-width="2" fill="none"/></svg></div>
        <div class="row on"><i></i></div>
        ${Array.from({ length: 12 }, () => html`<div class="row"><i></i></div>`)}
      </div>
      <div class="foot">
        <div class="snail"><svg width="44" height="34" viewBox="0 0 44 34"><path d="M4 32c10 1 20 1 27-4 5-4 4-9 8-12l1-3c-3-1-7 1-8 5-3 6-10 9-18 10z" fill="#949596"/><path d="M36 13l-3-8M40 13l3-8" stroke="#949596" stroke-width="2"/><circle cx="15" cy="16" r="14.500" fill="#949596"/><path d="M15 17c1-3 5-1 4 2s-8 4-9-2 5-10 11-7 7 11 2 15" stroke="#17191b" stroke-width="2.200" fill="none"/></svg></div>
        <div class="tail"><span>f</span><svg width="24" height="16" viewBox="0 0 24 16"><path d="M2 14 12 3l10 11" fill="none" stroke="#0878bd" stroke-width="5"/></svg></div>
      </div>`;
  }
}

/* ---------- Word window ---------- */
@customElement("word-window")
export class WordWindow extends LitElement {
  static styles = css`
    :host { display: flex; flex-direction: column; box-sizing: border-box; width: 1856px; height: 1440px; border: 2px solid #4a4a4a; border-top-color: #6e6e6e; border-radius: 12px 12px 0 0; background: #2a2a2a; overflow: hidden; font-family: Inter, "Liberation Sans", sans-serif; }
    svg { display: block; overflow: visible; }
    .bar { height: 44px; flex: none; display: grid; grid-template-columns: 835px 501px 425px 1fr; align-items: start; }
    .left { display: flex; align-items: flex-start; padding: 8px 0 0 24px; }
    .lights { display: flex; gap: 16px; margin: 4px 61px 0 0; }
    .lights i { width: 24px; height: 24px; border-radius: 50%; background: #434343; display: grid; place-items: center; }
    .lights i:first-child::after { content: ""; width: 8px; height: 8px; border-radius: 50%; background: #1f1f1f; }
    .name { color: #a3a3a3; font-size: 25px; line-height: 30px; padding: 10px 0 0 22px; letter-spacing: .1px; }
    .find { height: 36px; margin-top: 6px; background: #505050; border-radius: 5px; display: flex; align-items: center; gap: 8px; padding-left: 10px; color: #8f8f8f; font-size: 24.500px; font-weight: 600; letter-spacing: -0.400px; line-height: 40px; }
    .person { padding: 6px 0 0 35px; }
    .body { flex: none; height: 1334px; background: #242424; }
    .paper { flex: none; height: 16px; display: flex; background: #6c6c6c; border-bottom: 2px solid #000; }
    .paper .edge { width: 28px; background: #222; } .paper .rule { width: 14px; background: #4a4a4a; } .paper .gut { width: 38px; border-right: 2px solid #555; }
    .status { flex: 1; background: #252525; display: grid; grid-template-columns: 338px 78px 602px 132px 74px 19px 150px 355px 1fr; align-items: start; color: #777; font-size: 21px; line-height: 24px; }
    .status > * { margin-top: 8px; white-space: nowrap; }
    .status .on { margin: 0; height: 40px; background: #353535; padding: 8px 0 0 23px; box-sizing: border-box; }
    .knob { width: 16px; height: 16px; border-radius: 50%; background: #777; margin-left: 191px; }
  `;
  render() {
    const c = "#999";
    return html`
      <div class="bar">
        <div class="left">
          <div class="lights"><i></i><i></i><i></i></div>
          <svg width="540" height="28" viewBox="0 0 540 28" fill="none" stroke=${c}>
            <path d="M1 15 16 2 31 15" stroke-width="3.500"/><path d="M4 18 16 7 28 18v12h-8v-9h-8v9H4z" fill=${c} stroke="none"/>
            <path d="M65 2h25v24H65zM65 17h25M73 27v-7h9v7" stroke-width="3"/>
            <path d="M138 3l-9 9 9 9M129 12h14c8 0 12 5 10 14" stroke-width="3.500"/><path d="M170 10h10l-5 8z" fill=${c} stroke="none"/>
            <path d="M211 8c-6 7-4 15 3 19M232 27c6-7 5-17-3-21M226 14V4h11" stroke-width="3.500"/>
            <path d="M276 12V1h14v11M270 24h-2V12h31v12h-3M275 18h16v10h-16z" stroke-width="3"/>
            <path d="M338 11h14" stroke-width="3"/><path d="M338 16h14l-7 8z" fill=${c} stroke="none"/>
          </svg>
        </div>
        <div class="name">Document1</div>
        <div class="find"><svg width="38" height="26" viewBox="0 0 38 26" fill="none" stroke="#ddd"><circle cx="10" cy="10" r="8.500" stroke-width="2.200"/><path d="M16 16l8 9" stroke-width="2.500"/><path d="M27 10l4 4 4-4" stroke-width="2.200"/></svg><span>Search in Document</span></div>
        <div class="person"><svg width="34" height="34" viewBox="0 0 34 34"><path d="M11 0h20a2 2 0 0 1 2 2v15h-5l-5 5v-5h-2a9 9 0 0 0-10-7z" fill=${c}/><circle cx="11" cy="18" r="6" fill=${c}/><path d="M1 32c0-8 20-8 20 0z" fill=${c}/></svg></div>
      </div>
      <div class="body"></div>
      <div class="paper"><div class="edge"></div><div class="rule"></div><div class="gut"></div></div>
      <div class="status">
        <span></span><svg width="28" height="22" viewBox="0 0 28 22"><path d="M14 20V5C10 1 6 1 1 2v17M14 5c4-4 8-4 13-3v17" fill="none" stroke="#888" stroke-width="2"/></svg>
        <span>English (United States)</span>
        <svg width="30" height="20" viewBox="0 0 30 20"><rect x="1" y="4" width="28" height="16" fill="none" stroke="#999" stroke-width="2"/></svg>
        <div class="on"><svg width="28" height="20" viewBox="0 0 28 20"><rect x="1" y="2" width="26" height="20" fill="none" stroke="#999" stroke-width="2"/><path d="M5 7h18" stroke="#999" stroke-width="2"/></svg></div>
        <span></span>
        <svg width="180" height="20" viewBox="0 0 180 20"><rect x="1" y="2" width="22" height="20" fill="none" stroke="#999" stroke-width="2"/><path d="M5 7h14M75 7h4M83 7h13M146 7h28" stroke="#999" stroke-width="2"/></svg>
        <div class="knob"></div><span>110%</span>
      </div>`;
  }
}

/* ---------- report page ---------- */
@customElement("report-page")
export class ReportPage extends LitElement {
  static styles = css`
    :host { display: flex; flex-direction: column; flex: 1; background: #fff; font-family: "Noto Sans", "Open Sans", sans-serif; color: #606060; }
    .sheet { flex: 1; display: flex; }
    .side { width: 296px; background: #fff; }
    .texture { display: block; width: 296px; height: 1162px; }
    .rail { width: 10px; background: #eee; }
    .main { flex: 1; background: linear-gradient(#fff 94%, #fbfbfb); }
    .strip { height: 10px; background: #e9e9e9; } .strip.b { height: 12px; background: #f0f0f0; }
    .cols { display: grid; grid-template-columns: 474px 420px 420px 420px; column-gap: 0; }
    .cols > :nth-child(3) { margin-left: 14px; margin-right: -14px; } .cols > :nth-child(4) { margin-left: 26px; margin-right: -26px; }
    .green { --tint: #d3e6cc; } .blue { --tint: #cddcec; } .amber { --tint: #f8e5c5; }
    .thumb { height: 14px; border: 2px solid var(--tint); border-top: 0; display: flex; overflow: hidden; align-items: flex-start; }
    .ln { width: 58px; height: 3px; margin: 8px 0 0 42px; background: #6f9fba; }
    .cap { font: 700 8px/10px "Noto Sans", sans-serif; margin: 5px 0 0 13px; color: #3d7290; white-space: nowrap; letter-spacing: -0.250px; }
    .idx { font: 6.500px/8px "Noto Sans", sans-serif; color: #555; white-space: nowrap; margin-left: 205px; }
    .idx.first { margin-left: 38px; color: #888; }
    .gold { width: 0; height: 0; margin: 9px 0 0 28px; border-bottom: 5px solid #e2ae40; border-left: 12px solid transparent; }
    .aqua { width: 44px; height: 14px; margin-left: 193px; background: #c2ebef; } .red { width: 53px; height: 14px; margin-left: 43px; background: #e02028; }
    .meta { margin-top: 14px; font-size: 17.500px; line-height: 22px; text-align: center; white-space: nowrap; }
    .meta .l { letter-spacing: -0.200px; } .meta .v { letter-spacing: -0.950px; } .meta .c { letter-spacing: -0.870px; } .meta .u { letter-spacing: -0.960px; }
    .meta a { color: #419bdb; text-decoration: underline; text-underline-offset: 3px; text-decoration-thickness: 2px; }
    .scores { margin-top: 20px; }
    .names { text-align: right; padding: 25px 40px 0 0; font-size: 23.500px; line-height: 44px; letter-spacing: -1.350px; }
    .card { height: 308px; border: 4px solid var(--tint); background: linear-gradient(#fff, #e9e9e9); text-align: center; }
    .card .line { height: 44px; line-height: 44px; font-size: 23.500px; font-weight: 600; letter-spacing: -1px; }
    .card .line:first-child { margin-top: 21px; }
    .card small { font-size: 20.500px; font-weight: 400; letter-spacing: -1.150px; margin-left: 7px; }
    .t-good { color: #55bd4f; } .t-bad { color: #e43437; } .t-plain { color: #606060; }
    .tabs { margin: 40px 28px 0; display: flex; align-items: stretch; font-size: 24.500px; line-height: 57px; letter-spacing: -1.650px; height: 62px; font-weight: 500; }
    .tab { box-sizing: border-box; background: #f5f5f5; border-bottom: 4px solid #dfdfdf; text-align: center; }
    .tab.on { width: 200px; background: #fff; border-top: 4px solid #419bdb; border-bottom: 0; color: #419bdb; line-height: 49px; }
    .tab.s { width: 164px; border-right: 2px solid #dfdfdf; } .tab.w { width: 162px; border-right: 2px solid #dfdfdf; } .tab.g { width: 140px; }
    .rest { flex: 1; box-sizing: border-box; border-bottom: 4px solid #dfdfdf; }
    .grid { margin-top: 20px; display: grid; grid-template-columns: 474px 422px 420px 420px; font: 15px/36px "Liberation Sans", Arial, sans-serif; }
    .grid > :nth-child(3) { margin-left: 12px; margin-right: -12px; } .grid > :nth-child(4) { margin-left: 24px; margin-right: -24px; }
    .keys { text-align: right; padding: 3px 13px 0 0; color: #2c6da2; font-size: 14.700px; }
    .keys div { height: 38px; line-height: 37px; } .keys div:first-child { line-height: 30px; height: 37px; } .keys div:last-child { line-height: 39px; }
    .cells { display: flex; flex-direction: column; border-top: 4px solid var(--tint); border-bottom: 4px solid var(--tint); }
    .cell { height: 38px; line-height: 34px; text-align: center; font-weight: 700; color: #fff; border: solid var(--tint); border-width: 0 4px; }
    .cell::after { content: ""; display: block; height: 2px; margin: 2px 2px 0; background: #fff; }
    .cell:first-child { line-height: 36px; } .cell:first-child::after { margin-top: 0; }
    .cell:last-child { height: 36px; } .cell:last-child::after { display: none; }
    .cell.good { background: #58c152; } .cell.bad { background: #e43437; } .cell.plain { background: #f3f3f3; color: #5b5b5b; } .cell.plain:nth-child(even) { background: #fafafa; }
    .cell.na { background: #f3f3f3; color: #6b6b6b; opacity: .62; }
  `;
  render() {
    const chrome = "Chrome (Desktop) 86.0.4240.193";
    return html`
      <div class="sheet">
        <div class="side">${texture("tx-left")}</div><div class="rail"></div>
        <div class="main">
          <div class="cols">
            <span></span>
            <div class="thumb green"><div class="ln"></div><span class="cap">Vol. 18, No. 2, July 2020</span></div>
            <div class="thumb blue"><span class="idx first">indexed in</span><div class="gold"></div><div class="aqua"></div></div>
            <div class="thumb amber"><div class="red"></div><span class="idx">jsi is indexed to..</span></div>
          </div>
          <div class="cols">
            <span></span>
            ${sites.map((s) => html`<div class="meta"><div class="u"><a>${s.url}</a></div><div class="l">${s.time}</div><div class="v">Vancouver, Canada</div><div class="c">${chrome}</div></div>`)}
          </div>
          <div class="cols scores">
            <div class="names">${scoreLabels.map((l) => html`<div>${l}</div>`)}</div>
            ${sites.map((s) => html`<div class="card ${s.tint}">${s.scores.map(([v, t, d, dt]) => html`<div class="line"><span class="t-${t}">${v}</span>${d ? html`<small class="t-${dt}">${d}</small>` : nothing}</div>`)}</div>`)}
          </div>
          <div class="tabs"><div class="tab on">Performance</div><div class="tab s">Structure</div><div class="tab w">Waterfall</div><div class="tab g">Graphs</div><div class="rest"></div></div>
          <div class="grid">
            <div class="keys">${metricLabels.map((l) => html`<div>${l}</div>`)}</div>
            ${metrics.map(([tint, cells]) => html`<div class="cells ${tint}">${cells.map(([v, t]) => html`<div class="cell ${t}">${v}</div>`)}</div>`)}
          </div>
        </div>
        <div class="rail"></div><div class="side">${texture("tx-right")}</div>
      </div>
      <div class="strip"></div><div class="strip b"></div>`;
  }
}

/* ---------- Chrome window ---------- */
@customElement("chrome-window")
export class ChromeWindow extends LitElement {
  static styles = css`
    :host { display: flex; flex-direction: column; width: 2400px; height: 1342px; border-radius: 12px; overflow: hidden; background: #35363a; font-family: Inter, "Liberation Sans", sans-serif; box-shadow: 0 0 0 1.500px #000, 0 16px 60px 8px rgba(0, 0, 0, .5); }
    svg { display: block; overflow: visible; }
    .strip { flex: none; box-sizing: border-box; height: 84px; background: #202124; border-top: 2px solid #6c6d6e; border-left: 2px solid #4f5052; border-right: 2px solid #4f5052; border-radius: 12px 12px 0 0; display: flex; padding-top: 14px; }
    .lights { display: flex; gap: 16px; padding: 15px 0 0 24px; width: 131px; }
    .lights i { width: 24px; height: 24px; border-radius: 50%; }
    .r { background: #ff5b57; } .y { background: #e5bf3c; } .gr { background: #59c136; }
    .tab { width: 86px; height: 68px; display: flex; align-items: center; position: relative; box-sizing: border-box; padding-left: 15px; }
    .tab.wide { width: 88px; }
    .tab::after { content: ""; position: absolute; right: -1px; top: 15px; width: 2px; height: 40px; background: #5a5b5e; }
    .tab svg { width: 32px; height: 32px; flex: none; margin-right: 17px; }
    .tab span { width: 10px; overflow: hidden; font-size: 22.500px; line-height: 32px; color: #cfd0d2; -webkit-mask: linear-gradient(90deg, #000 50%, transparent 110%); mask: linear-gradient(90deg, #000 50%, transparent 110%); }
    .tab.jay span { width: 7px; }
    .tab.text span { width: 50px; -webkit-mask: linear-gradient(90deg, #000 50%, transparent 105%); mask: linear-gradient(90deg, #000 50%, transparent 105%); }
    .tab.noline::after { display: none; }
    .tab.active { width: 87px; background: #35363a; border-radius: 16px 16px 0 0; }
    .tab.active::before { content: ""; position: absolute; left: -16px; right: -16px; bottom: 0; height: 16px; background: radial-gradient(circle at 0 0, transparent 15.500px, #35363a 16px) left / 16px 16px no-repeat, radial-gradient(circle at 100% 0, transparent 15.500px, #35363a 16px) right / 16px 16px no-repeat; }
    .tab.active span { width: 17px; color: #fff; -webkit-mask: none; mask: none; }
    .tab.active svg { width: 18px; height: 18px; margin: 0 0 0 14px; }
    .new { margin: 22px 0 0 32px; }
    .bar { flex: none; height: 72px; border-bottom: 2px solid #232428; display: flex; align-items: center; padding: 0 38px 0 29px; border-left: 2px solid #4f5052; border-right: 2px solid #4f5052; }
    .back { width: 64px; } .fwd { width: 64px; } .rel { width: 57px; }
    .omni { width: 1968px; box-sizing: border-box; height: 56px; border-radius: 28px; background: #202124; display: flex; align-items: center; padding: 0 21px 0 28px; margin-right: 30px; }
    .url { margin-left: 25px; flex: 1; font-size: 27.500px; color: #9a9b9e; white-space: nowrap; letter-spacing: -0.080px; }
    .url b { font-weight: 400; color: #fff; }
    .star { margin-left: 35px; }
    .who { width: 44px; height: 44px; border-radius: 50%; background: #a94bb9; color: #fff; font-size: 24px; line-height: 44px; text-align: center; margin: 0 39px 0 28px; }
  `;
  render() {
    return html`
      <div class="strip">
        <div class="lights"><i class="r"></i><i class="y"></i><i class="gr"></i></div>
        ${tabs.map((t, i) => html`<div class=${classMap({ tab: true, wide: !!t.wide, active: !!t.active, jay: t.text === "J", text: !t.icon && !t.active, noline: !!t.active || !!tabs[i + 1]?.active })}>
          ${t.icon ? fav[t.icon] : nothing}<span>${t.text}</span>
          ${t.active ? html`<svg viewBox="0 0 18 18"><path d="M2 2l14 14M16 2 2 16" stroke="#fff" stroke-width="3.200" stroke-linecap="round"/></svg>` : nothing}
        </div>`)}
        <svg class="new" width="24" height="24" viewBox="0 0 24 24"><path d="M12 1.500v21M1.500 12h21" stroke="#c4c5c8" stroke-width="3.400" stroke-linecap="round"/></svg>
      </div>
      <div class="bar">
        <div class="back"><svg width="26" height="26" viewBox="0 0 26 26" fill="none" stroke="#fff" stroke-width="3" stroke-linecap="round"><path d="M25 13H2M13 1.500 1.500 13 13 24.500"/></svg></div>
        <div class="fwd"><svg width="26" height="26" viewBox="0 0 26 26" fill="none" stroke="#7e7f82" stroke-width="3" stroke-linecap="round"><path d="M1 13h23M13 1.500 24.500 13 13 24.500"/></svg></div>
        <div class="rel"><svg width="27" height="27" viewBox="0 0 27 27"><path d="M24.500 17A11.500 11.500 0 1 1 21.500 5.200" fill="none" stroke="#f1f2f4" stroke-width="3"/><path d="M27 0v11.500H15.500z" fill="#f1f2f4"/></svg></div>
        <div class="omni">
          <svg width="16" height="21" viewBox="0 0 16 21"><rect y="7" width="16" height="14" rx="2" fill="#e8e8e8"/><path d="M3.800 8V5a4.200 4.200 0 0 1 8.400 0v3" fill="none" stroke="#e8e8e8" stroke-width="2.200"/></svg>
          <div class="url"><b>gtmetrix.com</b>/compare/QXDQVCLx/qcXo2YgQ/G86tdjd2</div>
          <svg width="27" height="27" viewBox="0 0 27 27" fill="none" stroke="#bcbdc0"><circle cx="11" cy="11" r="9.500" stroke-width="2.800"/><path d="M6.500 11h9" stroke-width="2.200"/><path d="M17.500 17.500l8 8" stroke-width="3.600"/></svg>
          <svg class="star" width="29" height="28" viewBox="0 0 29 28"><path d="M14.500 3.500l3.200 7.300 8 .7-6 5.300 1.800 7.800-7-4.200-7 4.200 1.800-7.800-6-5.300 8-.7z" fill="none" stroke="#bcbdc0" stroke-width="2.500"/></svg>
        </div>
        <svg width="28" height="28" viewBox="0 0 28 28"><path d="M1 5.500h7.200V4a3.600 3.600 0 0 1 7.200 0v1.500H21a1.500 1.500 0 0 1 1.500 1.500v5.800H24a3.700 3.700 0 0 1 0 7.400h-1.500V26a2 2 0 0 1-2 2h-5v-2a3.600 3.600 0 0 0-7.200 0v2H2.500a2 2 0 0 1-2-2v-5.500H2a3.600 3.600 0 0 0 0-7.200H.5V7z" fill="#f1f2f4"/></svg>
        <div class="who">H</div>
        <svg width="6" height="26" viewBox="0 0 6 26"><circle cx="3" cy="3" r="3" fill="#f1f2f4"/><circle cx="3" cy="13" r="3" fill="#f1f2f4"/><circle cx="3" cy="23" r="3" fill="#f1f2f4"/></svg>
      </div>
      <report-page></report-page>`;
  }
}

/* ---------- dock ---------- */
@customElement("mac-dock")
export class MacDock extends LitElement {
  static styles = css`
    :host { display: flex; box-sizing: border-box; width: 2440px; height: 98px; padding-left: 4px; border: 2px solid #454547; border-bottom: 0; border-radius: 12px 12px 0 0; background: linear-gradient(90deg, #121214, #201f22 20%, #1e1d20 58%, #252619 63%, #1c1b1e 72%, #131314 85%); font-family: "Open Sans", sans-serif; }
    .defs { position: absolute; width: 0; height: 0; }
    .group { display: flex; }
    .slot { width: 78.500px; display: flex; flex-direction: column; align-items: center; padding-top: 11px; position: relative; box-sizing: border-box; }
    .slot svg { display: block; width: 64px; height: 64px; overflow: visible; }
    .dot { width: 8px; height: 8px; border-radius: 50%; background: #98989a; margin-top: 7px; }
    .sep { width: 2px; height: 60px; background: #4a4a4d; margin: 16px 15px 0 19px; }
    .sep.b { height: 72px; margin: 10px 17px 0 17px; }
    .badge { position: absolute; top: 6px; right: 0; min-width: 28px; height: 28px; border-radius: 14px; background: #f5413f; color: #fff; font-size: 18px; line-height: 28px; text-align: center; }
    .badge.long { min-width: 32px; letter-spacing: -0.500px; }
  `;
  render() {
    return html`${defs}${dockGroups.map((grp, i) => html`
      <div class="group">${grp.map((a) => html`<div class="slot"><svg viewBox="0 0 64 64">${apps[a.name]}</svg>
        ${a.badge ? html`<span class="badge ${a.badge.length > 1 ? "long" : ""}">${a.badge}</span>` : nothing}
        ${a.dot ? html`<i class="dot"></i>` : nothing}</div>`)}</div>
      ${i < 2 ? html`<div class="sep ${i ? "b" : ""}"></div>` : nothing}`)}`;
  }
}

@customElement("app-root")
export class AppRoot extends LitElement {
  static styles = css`
    :host { display: block; position: relative; width: 2560px; height: 1600px; background: #000; overflow: hidden; }
    .shade { position: absolute; border-radius: 0 0 12px 12px; border: 2px solid #3a3a3b; box-sizing: border-box; background: linear-gradient(90deg, #1c1c1d, #131313); }
    .s1 { left: 36px; top: 1400px; width: 2524px; height: 98px; } .s2 { left: 0; top: 1400px; width: 2560px; height: 92px; }
    .panel { position: absolute; left: 2100px; top: 122px; width: 344px; height: 40px; border: 2px solid #3f4244; border-radius: 10px; box-sizing: border-box; }
    .green { position: absolute; left: 86px; top: 1460px; width: 186px; height: 18px; background: #4f8f33; }
    fdm-window, word-window, chrome-window, mac-dock { position: absolute; }
    fdm-window { left: 0; top: 46px; }
    word-window { left: 270px; top: 92px; box-shadow: 0 0 0 1.500px #000, 0 10px 40px rgba(0, 0, 0, .4); }
    chrome-window { left: 84px; top: 130px; }
    mac-dock { left: 60px; top: 1504px; }
  `;
  render() {
    return html`<mac-menubar></mac-menubar>
      <div class="shade s1"></div><div class="shade s2"></div>
      <fdm-window></fdm-window><div class="panel"></div><div class="green"></div>
      <word-window></word-window><chrome-window></chrome-window><mac-dock></mac-dock>`;
  }
}
